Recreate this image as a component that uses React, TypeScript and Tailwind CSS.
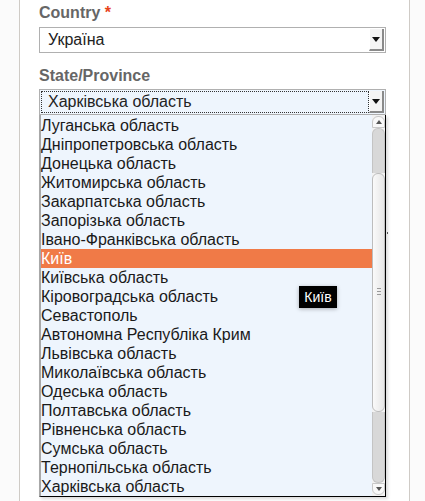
import React from "react";

const regions = [
  "Луганська область",
  "Дніпропетровська область",
  "Донецька область",
  "Житомирська область",
  "Закарпатська область",
  "Запорізька область",
  "Івано-Франківська область",
  "Київ",
  "Київська область",
  "Кіровоградська область",
  "Севастополь",
  "Автономна Республіка Крим",
  "Львівська область",
  "Миколаївська область",
  "Одеська область",
  "Полтавська область",
  "Рівненська область",
  "Сумська область",
  "Тернопільська область",
  "Харківська область",
];

function ArrowBtn() {
  return (
    <div className="flex h-full w-[15px] items-center justify-center border-r-2 border-b-2 border-r-[#8a8a8a] border-b-[#8a8a8a] border-l border-l-white bg-[#f4f4f4]">
      <svg width="8" height="5" viewBox="0 0 8 5">
        <path d="M0 0 H8 L4 5 Z" fill="#111" />
      </svg>
    </div>
  );
}

export default function App() {
  return (
    <div
      className="relative h-[501px] w-[425px] overflow-hidden bg-[#fbfbfb]"
      style={{ fontFamily: '"Liberation Sans", Arial, sans-serif' }}
    >
      <div className="ml-[19px] h-full w-[391px] border-x border-[#cfcbc6] bg-white pl-[19px] pt-[3px]">
        <div className="text-[16px] font-bold leading-[20px] text-[#666]">
          Country <span className="text-[#e8431b]">*</span>
        </div>
        <div className="mt-[4px] flex h-[26px] w-[347px] items-stretch border border-[#b0b0b0] bg-white p-[1px]">
          <div className="flex-1 pl-[7px] text-[16px] leading-[22px] text-[#222]">Україна</div>
          <ArrowBtn />
        </div>
        <div className="mt-[13px] text-[16px] font-bold leading-[20px] text-[#666]">State/Province</div>
        <div className="mt-[3px] flex h-[26px] w-[347px] items-stretch border border-[#b0b0b0] bg-[#eef5fd] p-[1px]">
          <div className="flex-1 border border-dotted border-[#333] pl-[6px] text-[16px] leading-[20px] text-[#222]">
            Харківська область
          </div>
          <ArrowBtn />
        </div>
      </div>

      {/* dropdown list */}
      <div className="absolute left-[39px] top-[115px] flex h-[382px] w-[347px] border-l-2 border-r border-b border-l-[#a8a8a8] border-r-black border-b-black bg-[#eef5fd] shadow-[2px_2px_3px_rgba(0,0,0,0.15)]">
        <div className="flex-1 pt-[1px]">
          {regions.map((r, i) => (
            <div
              key={i}
              className={
                i === 7
                  ? "h-[19px] bg-[#f07a47] text-[16px] leading-[19px] text-white"
                  : "h-[19px] text-[16px] leading-[19px] text-[#1a1a1a]"
              }
            >
              {r}
            </div>
          ))}
        </div>
        {/* scrollbar */}
        <div className="flex w-[13px] flex-col bg-[#f2f2f2] py-[1px]">
          <div className="flex h-[12px] items-center justify-center rounded-t-[6px] border border-[#c8c8c8] bg-[#f8f8f8]">
            <svg width="6" height="4" viewBox="0 0 6 4">
              <path d="M0 4 H6 L3 0 Z" fill="#555" />
            </svg>
          </div>
          <div className="h-[45px] rounded-t-[6px] border-x border-t border-[#c4c4c4] bg-[#d8d8d8]" />
          <div className="flex h-[239px] items-end justify-center rounded-[6px] border border-[#bdbdbd] bg-gradient-to-r from-[#fafafa] to-[#e6e6e6] pb-[116px]">
            <div className="flex flex-col gap-[2px]">
              <div className="h-px w-[4px] bg-[#999]" />
              <div className="h-px w-[4px] bg-[#999]" />
              <div className="h-px w-[4px] bg-[#999]" />
            </div>
          </div>
          <div className="flex-1 rounded-b-[6px] border-x border-b border-[#c4c4c4] bg-[#d8d8d8]" />
          <div className="flex h-[12px] items-center justify-center rounded-b-[6px] border border-[#c8c8c8] bg-[#f8f8f8]">
            <svg width="6" height="4" viewBox="0 0 6 4">
              <path d="M0 0 H6 L3 4 Z" fill="#555" />
            </svg>
          </div>
        </div>
      </div>

      <div className="absolute left-[387px] top-[232px] h-[2px] w-px bg-[#555]" />

      {/* tooltip */}
      <div className="absolute left-[299px] top-[286px] flex h-[22px] w-[38px] items-center justify-center bg-black text-[14px] font-medium text-white shadow-[0_1px_4px_rgba(0,0,0,0.3)]">
        Київ
      </div>
    </div>
  );
}
